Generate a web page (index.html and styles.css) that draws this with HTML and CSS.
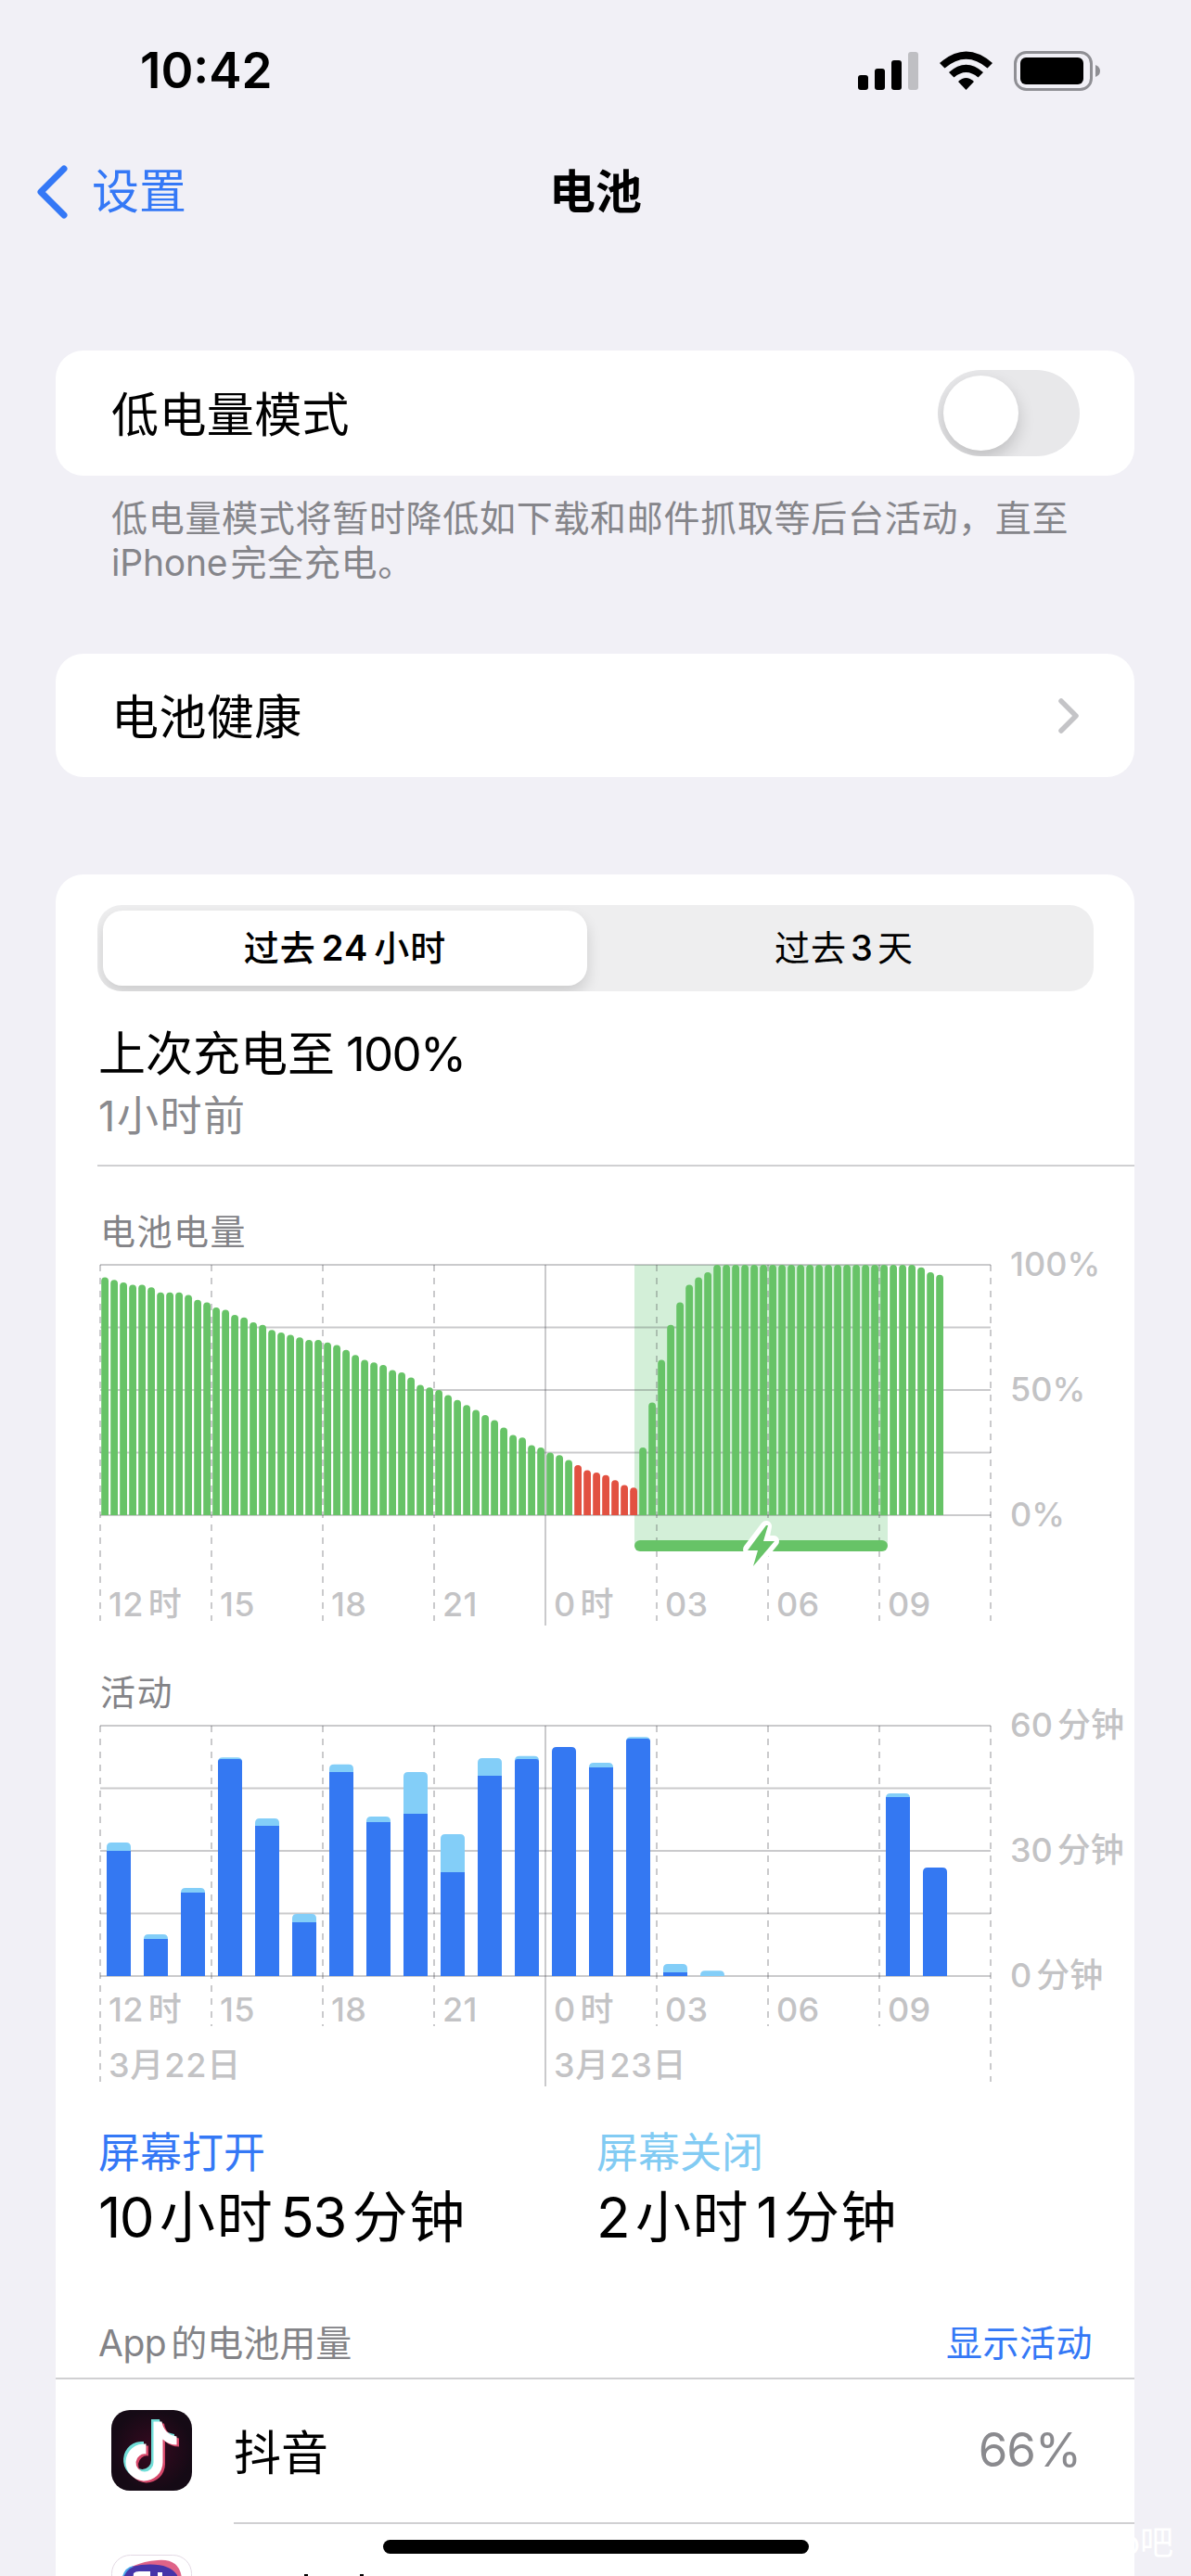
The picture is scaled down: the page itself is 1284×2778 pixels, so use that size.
FILE: index.html
```html
<!DOCTYPE html>
<html lang="zh-CN">
<head>
    <meta charset="UTF-8">
    <meta name="viewport" content="width=device-width, initial-scale=1.0">
    <title>电池</title>
    <link rel="stylesheet" href="styles.css">
</head>
<body>
    <div class="status-bar">
        <span class="time">10:42</span>
        <svg class="status-icons" width="264" height="50" viewBox="0 0 264 50">
            <rect x="0" y="30" width="11" height="16" rx="3"/>
            <rect x="18" y="23" width="11" height="23" rx="3"/>
            <rect x="36" y="14" width="11" height="32" rx="3"/>
            <rect x="54" y="5" width="11" height="41" rx="3" fill="#bfbfc3"/>
            <path d="M88 17Q116.500 -8 145 17L139.500 22.500Q116.500 3 93.500 22.500Z"/>
            <path d="M98 27Q116.500 10.500 135 27L129.500 32.500Q116.500 21.500 103.500 32.500Z"/>
            <path d="M108 37Q116.500 29 125 37L116.500 46Z"/>
            <rect x="169.500" y="5.500" width="82" height="40" rx="12" fill="none" stroke="#8f8f94" stroke-width="3"/>
            <rect x="175" y="11" width="68" height="29" rx="6"/>
            <path d="M256 19q5 2 5 6.500t-5 6.500z" fill="#8f8f94"/>
        </svg>
    </div>

    <div class="nav">
        <a class="back">
            <svg width="36" height="60" viewBox="0 0 36 60"><path d="M31 5L6 30L31 55" fill="none" stroke="#3478f6" stroke-width="7" stroke-linecap="round" stroke-linejoin="round"/></svg>
            <span>设置</span>
        </a>
        <h1>电池</h1>
    </div>

    <div class="card low-power">
        <span>低电量模式</span>
        <div class="switch"><div class="knob"></div></div>
    </div>
    <p class="footnote">低电量模式将暂时降低如下载和邮件抓取等后台活动，直至<br><span class="latin">iPhone</span>完全充电。</p>

    <div class="card health">
        <span>电池健康</span>
        <svg width="24" height="40" viewBox="0 0 24 40"><path d="M4 4L20 20L4 36" fill="none" stroke="#c4c4c7" stroke-width="5.500" stroke-linecap="round" stroke-linejoin="round"/></svg>
    </div>

    <div class="card usage">
        <div class="segmented">
            <div class="segment selected">过去<b>24</b>小时</div>
            <div class="segment">过去<b>3</b>天</div>
        </div>
        <div class="last-charge">
            <div class="charge-title">上次充电至<b>100%</b></div>
            <div class="charge-time">1小时前</div>
        </div>

        <h2 class="chart-title">电池电量</h2>
        <svg class="chart" id="levelChart" width="1115" height="416" viewBox="0 -16 1115 416"></svg>

        <h2 class="chart-title second">活动</h2>
        <svg class="chart" id="activityChart" width="1115" height="416" viewBox="0 -16 1115 416"></svg>

        <div class="totals">
            <div class="total">
                <div class="total-label on">屏幕打开</div>
                <div class="total-value">10<i>小时</i>53<i>分钟</i></div>
            </div>
            <div class="total">
                <div class="total-label off">屏幕关闭</div>
                <div class="total-value">2<i>小时</i>1<i>分钟</i></div>
            </div>
        </div>

        <div class="list-header">
            <span class="list-title"><b>App</b>的电池用量</span>
            <a class="show-activity">显示活动</a>
        </div>
        <div class="app-row">
            <svg class="app-icon" width="87" height="87" viewBox="0 0 87 87">
                <defs>
                    <radialGradient id="douyinBg">
                        <stop offset="0" stop-color="#380a20"/>
                        <stop offset="1" stop-color="#150a15"/>
                    </radialGradient>
                    <path id="note" d="M45 12H54C55 20 61 27 70 28V37C64 37 59 35 55 31V56A20 20 0 1 1 37 36V47A9.500 9.500 0 1 0 45 56Z"/>
                </defs>
                <rect width="87" height="87" rx="20" fill="url(#douyinBg)"/>
                <use href="#note" x="-2" y="-2" fill="#72ded8"/>
                <use href="#note" x="3" y="2.500" fill="#d6486a"/>
                <use href="#note" x="0.500" y="0.500" fill="#fff"/>
            </svg>
            <div class="app-info">
                <span>抖音</span>
                <span class="percent">66%</span>
            </div>
        </div>
        <div class="app-row next">
            <svg class="app-icon" width="87" height="87" viewBox="0 0 87 87">
                <rect x="0.500" y="0.500" width="86" height="86" rx="20" fill="#fff" stroke="#e3d9e4"/>
                <path d="M12 26Q16 9 50 6Q74 4 76 26V60H12Z" fill="#df6388"/>
                <path d="M11 30Q12 14 24 12Z" fill="#4aa8e8"/>
                <path d="M12 30Q14 13 32 11Q62 8 71 22L74 60H12Z" fill="#4635a9"/>
                <path d="M24 20Q26 18 30 18H42V40H22ZM50 19H55V40H50Z" fill="#fff"/>
            </svg>
            <div class="app-info">
                <svg width="160" height="12" viewBox="0 0 160 12"><path d="M76 0h4v12h-4zM136 0h4v12h-4z"/></svg>
            </div>
        </div>
    </div>

    <div class="watermark">o吧</div>
    <div class="home-indicator"></div>

    <script src="charts.js"></script>
</body>
</html>
```
FILE: styles.css
```css
* {
    box-sizing: border-box;
}
body {
    margin: 0;
    width: 1284px;
    height: 2778px;
    overflow: hidden;
    position: relative;
    background: #f1f0f6;
    color: #000;
    font-family: Inter, "Noto Sans CJK SC", sans-serif;
    font-size: 51px;
}
h1, h2, p {
    margin: 0;
}
b, i {
    font-weight: inherit;
    font-style: normal;
}

/* Top bars */
.status-bar {
    display: flex;
    justify-content: space-between;
    align-items: center;
    height: 152px;
    padding: 0 95px 0 151px;
}
.time {
    font-weight: 600;
    font-size: 53px;
    letter-spacing: 0;
}
.nav {
    display: grid;
    grid-template-columns: 1fr auto 1fr;
    align-items: center;
    height: 110px;
    padding: 0 38px;
    line-height: 60px;
}
.nav h1 {
    font-size: 50px;
    font-weight: 700;
}
.back {
    display: flex;
    align-items: center;
    gap: 25px;
    color: #3478f6;
    font-size: 51px;
}

/* Cards */
.card {
    margin: 0 61px 0 60px;
    background: #fff;
    border-radius: 30px;
}
.low-power,
.health {
    display: flex;
    justify-content: space-between;
    align-items: center;
    padding: 0 59px 0 60px;
}
.low-power span,
.health span {
    padding-bottom: 3px;
    letter-spacing: 0.4px;
}
.low-power {
    height: 135px;
    margin-top: 116px;
}
.health {
    height: 133px;
    margin-top: 74px;
}
.switch {
    width: 153px;
    height: 93px;
    padding: 6px;
    border-radius: 47px;
    background: #e8e8ea;
    overflow: hidden;
}
.knob {
    width: 81px;
    height: 81px;
    border-radius: 50%;
    background: #fff;
    box-shadow: 0 8px 18px rgba(0, 0, 0, 0.18);
}
.footnote {
    height: 118px;
    padding: 22px 100px 0 120px;
    font-size: 39px;
    line-height: 48px;
    letter-spacing: 0.7px;
    color: #85858a;
    white-space: nowrap;
}
.footnote .latin {
    letter-spacing: -0.2px;
    margin-right: 3px;
}
.usage {
    height: 1900px;
    margin-top: 105px;
    padding-top: 33px;
}
.segmented {
    display: flex;
    height: 93px;
    margin: 0 44px 0 45px;
    padding: 6px;
    border-radius: 26px;
    background: #eeeeef;
    overflow: hidden;
}
.segment {
    width: 522px;
    line-height: 81px;
    text-align: center;
    font-size: 38px;
    letter-spacing: 1px;
}
.segment:last-child {
    flex: 1;
    padding-left: 14px;
}
.segment b {
    margin: 0 4px;
    font-weight: 500;
}
.segment.selected {
    font-weight: 500;
    border-radius: 21px;
    background: #fff;
    box-shadow: 0 8px 16px rgba(0, 0, 0, 0.14);
}
.segment.selected b {
    margin: 0 6px;
    font-weight: 600;
}
.last-charge {
    height: 189px;
    margin-left: 45px;
    padding: 33px 0 0 1px;
    border-bottom: 2px solid #d0d0d2;
}
.charge-title {
    line-height: 70px;
}
.charge-title b {
    margin-left: 12px;
    letter-spacing: -1.7px;
}
.charge-time {
    font-size: 45px;
    line-height: 64px;
    letter-spacing: 1.6px;
    color: #8a8a8e;
}

/* Charts */
.chart-title {
    margin: 51px 0 0 48px;
    font-size: 38px;
    font-weight: 400;
    line-height: 39px;
    letter-spacing: 1.5px;
    color: #838387;
}
.chart-title.second {
    margin-top: 42px;
}
.chart {
    display: block;
    margin-left: 48px;
    overflow: visible;
}
.grid {
    stroke: rgba(60, 60, 67, 0.27);
    stroke-width: 2;
}
.dashed {
    stroke-dasharray: 7 7;
}
.axis-label {
    font-size: 36px;
    font-weight: 500;
    fill: #c3c3c5;
}
.hour-label {
    letter-spacing: 0.3px;
}
.date-label {
    letter-spacing: 0.8px;
}
.green {
    fill: #67c367;
}
.red {
    fill: #e25141;
}
.charging {
    fill: #d3efd8;
}
.screen-on {
    fill: #3478f2;
}
.screen-off {
    fill: #83cef8;
}

/* Screen time totals */
.totals {
    display: flex;
    margin: 31px 0 0 46px;
}
.total {
    width: 537px;
}
.total-label {
    font-size: 45px;
    line-height: 60px;
}
.total-label.on {
    color: #3478f6;
}
.total-label.off {
    color: #82cbf3;
}
.total-value {
    font-size: 60px;
    line-height: 78px;
    letter-spacing: -1.6px;
}
.total-value i {
    margin: 0 7px;
    letter-spacing: 1.6px;
}
.total-value i:last-child {
    margin-right: 0;
}

/* App list */
.list-header {
    display: flex;
    justify-content: space-between;
    height: 136px;
    padding: 60px 45px 0 46px;
    border-bottom: 2px solid #d0d0d2;
    font-size: 39px;
    line-height: 74px;
}
.list-title {
    color: #838387;
}
.list-title b {
    margin-right: 5px;
    letter-spacing: -0.5px;
}
.show-activity {
    letter-spacing: 0.5px;
    color: #3478f6;
}
.app-row {
    display: flex;
    align-items: center;
    gap: 45px;
    height: 156px;
    padding-left: 60px;
}
.app-icon {
    margin-bottom: 3px;
}
.app-info {
    flex: 1;
    display: flex;
    justify-content: space-between;
    align-items: center;
    align-self: stretch;
    padding: 0 58px 3px 0;
    border-bottom: 2px solid #d0d0d2;
}
.percent {
    color: #8a8a8e;
    letter-spacing: -1px;
}
.app-row.next {
    align-items: flex-start;
    padding-top: 33px;
}
.next .app-info {
    align-items: flex-start;
    padding-top: 21px;
    border-bottom: none;
}

/* Overlays at the bottom of the screen */
.home-indicator {
    position: absolute;
    left: 413px;
    bottom: 24px;
    width: 459px;
    height: 15px;
    border-radius: 8px;
    background: #000;
}
.watermark {
    position: absolute;
    right: 19px;
    bottom: 15px;
    font-size: 36px;
    line-height: 42px;
    color: #fff;
}
```
FILE: charts.js
```js
const HEIGHT = 270;
const WIDTH = 960;

// Battery level, one value per 15 minutes
const levels = [
    95, 94, 93, 92, 92, 91, 89, 89, 89, 88, 86, 85,
    83, 82, 80, 79, 77, 76, 74, 73, 72, 71, 70, 70,
    69, 68, 66, 64, 62, 61, 60, 58, 57, 55, 52, 51,
    50, 48, 46, 44, 42, 40, 38, 35, 32, 31, 28, 27,
    25, 24, 22, 20, 18, 17, 16, 14, 12, 11, 27, 45,
    62, 76, 85, 92, 95, 97, 100, 100, 100, 100, 100, 100,
    100, 100, 100, 100, 100, 100, 100, 100, 100, 100, 100, 100,
    100, 100, 100, 100, 99, 97, 96
];

// Minutes per hour: [total, screen on]
const activity = [
    [32, 30], [10, 8.9], [21.1, 20], [52.4, 52], [37.8, 36], [14.9, 12.9],
    [50.7, 48.9], [38.2, 36.9], [48.9, 38.9], [34, 24.9], [52.2, 48], [52.7, 52],
    [54.9, 54.9], [51.1, 50], [57.3, 56.9], [2.9, 0.9], [1.3, 0], [0, 0],
    [0, 0], [0, 0], [0, 0], [43.8, 42.9], [26, 26]
];

const hours = ["12时", "15", "18", "21", "0时", "03", "06", "09", ""];

function line(x1, y1, x2, y2, dashed) {
    return `<line class="grid${dashed ? " dashed" : ""}" x1="${x1}" y1="${y1}" x2="${x2}" y2="${y2}"/>`;
}

// small gap between the number and its unit
function withUnit(label) {
    return label.replace(/(时|分钟)/, '<tspan dx="5">$1</tspan>');
}

function roundedBar(x, h, w, r, cls) {
    const radius = Math.min(r, h);
    return `<path class="${cls}" d="M${x} ${HEIGHT}v${radius - h}q0 ${-radius} ${radius} ${-radius}h${w - 2 * radius}q${radius} 0 ${radius} ${radius}v${h - radius}z"/>`;
}

function drawGrid(labels, labelY, bottom, edgeBottom) {
    let out = "";
    for (let i = 0; i <= 4; i++) {
        out += line(0, i * HEIGHT / 4, WIDTH, i * HEIGHT / 4);
    }
    hours.forEach((hour, i) => {
        const midnight = i === 4;
        const edge = i === 0 || i === 8;
        const end = midnight ? edgeBottom + 5 : edge ? edgeBottom : bottom;
        out += line(i * 120, 0, i * 120, end, !midnight);
        if (hour) {
            out += `<text class="axis-label hour-label" x="${i * 120 + 9}" y="${labelY}">${withUnit(hour)}</text>`;
        }
    });
    labels.forEach((label, i) => {
        out += `<text class="axis-label" x="981" y="${i * HEIGHT / 2 + 12}">${withUnit(label)}</text>`;
    });
    return out;
}

function drawLevels() {
    let out = `<rect class="charging" x="576" y="0" width="273" height="303"/>`;
    out += drawGrid(["100%", "50%", "0%"], 379, 384, 384);
    levels.forEach((level, i) => {
        const low = i > 50 && i < 58;
        out += roundedBar(i * 10 + 1.2, level * 2.7, 7.8, 3.9, low ? "red" : "green");
    });
    out += `<rect class="green" x="576" y="297" width="273" height="12" rx="6"/>`;
    out += `<path d="M718 282L699 307H710L705 324L726 298H715Z" fill="#fff" stroke="#fff" stroke-width="12" stroke-linejoin="round"/>`;
    out += `<path class="green" d="M718 281L698 308H709L704 325L727 298H715L720 281Z"/>`;
    document.getElementById("levelChart").innerHTML = out;
}

function drawActivity() {
    let out = drawGrid(["60分钟", "30分钟", "0分钟"], 319, 324, 384);
    activity.forEach(([total, on], i) => {
        const x = i * 40 + 7;
        if (!total) return;
        out += roundedBar(x, total * 4.5, 26, 5, on === total ? "screen-on" : "screen-off");
        if (on && on < total) {
            // thin caps keep the rounded top on the lower bar too
            out += roundedBar(x, on * 4.5, 26, total - on < 0.8 ? 3 : 0, "screen-on");
        }
    });
    out += `<text class="axis-label date-label" x="9" y="379">3月22日</text>`;
    out += `<text class="axis-label date-label" x="489" y="379">3月23日</text>`;
    document.getElementById("activityChart").innerHTML = out;
}

drawLevels();
drawActivity();
```
